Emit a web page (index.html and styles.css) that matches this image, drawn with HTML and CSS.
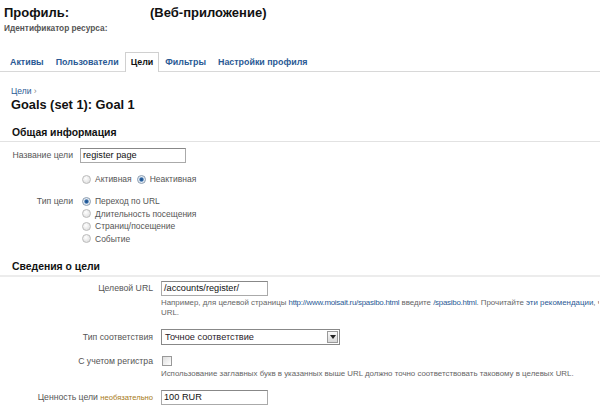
FILE: index.html
```html
<!DOCTYPE html>
<html lang="ru">
<head>
<meta charset="utf-8">
<link rel="stylesheet" href="styles.css">
</head>
<body>
<div class="page">
  <div class="header">
    <h1 class="title"><span class="t-profile">Профиль:</span><span>(Веб-приложение)</span></h1>
    <div class="resource">Идентификатор ресурса:</div>
  </div>
  <div class="tabs">
    <a class="tab">Активы</a>
    <a class="tab">Пользователи</a>
    <a class="tab active">Цели</a>
    <a class="tab">Фильтры</a>
    <a class="tab">Настройки профиля</a>
  </div>
  <div class="crumbs"><a class="link">Цели</a> ›</div>
  <h2 class="goal-title">Goals (set 1): Goal 1</h2>

  <h3 class="section">Общая информация</h3>
  <div class="form1">
    <div class="row r-name">
      <div class="lbl">Название цели</div>
      <div class="field"><div class="input w106">register page</div></div>
    </div>
    <div class="row r-active">
      <div class="lbl"></div>
      <div class="field radios-inline">
        <span class="opt"><span class="radio"></span>Активная</span>
        <span class="opt"><span class="radio on"></span>Неактивная</span>
      </div>
    </div>
    <div class="row r-type">
      <div class="lbl">Тип цели</div>
      <div class="field radios-stack">
        <span class="opt"><span class="radio on"></span>Переход по URL</span>
        <span class="opt"><span class="radio"></span>Длительность посещения</span>
        <span class="opt"><span class="radio"></span>Страниц/посещение</span>
        <span class="opt"><span class="radio"></span>Событие</span>
      </div>
    </div>
  </div>

  <h3 class="section section2">Сведения о цели</h3>
  <div class="form2">
    <div class="row r-url">
      <div class="lbl">Целевой URL</div>
      <div class="field">
        <div class="input w107">/accounts/register/</div>
        <div class="help help1">Например, для целевой страницы <a class="link latin">http://www.moisait.ru/spasibo.html</a> введите <a class="link latin">/spasibo.html</a>. Прочитайте <a class="link">эти рекомендации</a>, чтобы задать<br>URL.</div>
      </div>
    </div>
    <div class="row r-match">
      <div class="lbl">Тип соответствия</div>
      <div class="field">
        <div class="select"><span class="sel-text">Точное соответствие</span><span class="sel-btn"><svg width="6" height="4" viewBox="0 0 6 4"><path d="M0 0h6L3 4z" fill="#222"/></svg></span></div>
      </div>
    </div>
    <div class="row r-case">
      <div class="lbl">С учетом регистра</div>
      <div class="field">
        <span class="checkbox"></span>
        <div class="help help2">Использование заглавных букв в указанных выше URL должно точно соответствовать таковому в целевых URL.</div>
      </div>
    </div>
    <div class="row r-value">
      <div class="lbl">Ценность цели <span class="optional">необязательно</span></div>
      <div class="field"><div class="input w107">100 RUR</div></div>
    </div>
  </div>
</div>
</body>
</html>
```

FILE: styles.css
```css
html, body {
  margin: 0;
  padding: 0;
  background: #fff;
}
body {
  font-family: "Liberation Sans", Arial, sans-serif;
  color: #222;
  width: 600px;
  height: 411px;
  overflow: hidden;
}
.page {
  padding: 0;
}
.title {
  margin: 0 0 0 4px;
  padding-top: 5px;
  font-size: 13px;
  line-height: 16px;
  font-weight: bold;
  color: #111;
  display: flex;
}
.t-profile {
  width: 146px;
}
.resource {
  margin: 2px 0 0 4px;
  font-size: 8.3px;
  line-height: 10px;
  color: #555;
  font-weight: bold;
}
.tabs {
  margin-top: 19px;
  padding-left: 4px;
  display: flex;
  height: 19px;
  border-bottom: 1px solid #d8d8d8;
}
.tab {
  font-size: 8.9px;
  font-weight: bold;
  color: #2a5a95;
  line-height: 19px;
  padding: 0 5px;
  border: 1px solid transparent;
  border-bottom: none;
  margin-bottom: -1px;
  white-space: nowrap;
}
.tab.active {
  color: #111;
  background: #fff;
  border-color: #d0d0d0;
  height: 19px;
}
.crumbs {
  margin: 14px 0 0 11px;
  font-size: 8.5px;
  line-height: 10px;
  color: #888;
}
.link {
  color: #2a5a95;
  text-decoration: none;
}
.goal-title {
  margin: 1px 0 0 11px;
  font-size: 12.8px;
  line-height: 16px;
  font-weight: bold;
  color: #111;
}
.section {
  margin: 14px 0 0 0;
  padding: 0 0 2px 12px;
  font-size: 10.4px;
  line-height: 12px;
  font-weight: bold;
  color: #111;
  border-bottom: 1px solid #e2e2e2;
}
.section2 {
  margin-top: 16px;
  border-bottom: 2px solid #ececec;
}
.row {
  display: flex;
  align-items: flex-start;
}
.lbl {
  text-align: right;
  font-size: 8.7px;
  color: #555;
  flex-shrink: 0;
  white-space: nowrap;
}
.form1 .lbl {
  width: 73px;
  padding-right: 7px;
}
.form2 .lbl {
  width: 153px;
  padding-right: 8px;
}
.input {
  box-sizing: border-box;
  height: 15px;
  border: 1px solid #aaa;
  border-top-color: #888;
  font-size: 9.2px;
  line-height: 13px;
  padding: 0 2px;
  color: #111;
  white-space: nowrap;
}
.w106 { width: 106px; }
.w107 { width: 107px; }
.r-name { margin-top: 6px; }
.r-name .lbl { line-height: 15px; }
.r-active { margin-top: 10px; }
.opt {
  display: flex;
  align-items: center;
  font-size: 8.5px;
  color: #555;
  height: 12px;
  line-height: 12px;
  white-space: nowrap;
}
.radios-inline {
  display: flex;
  gap: 5px;
  margin-left: 2px;
}
.radios-stack {
  display: flex;
  flex-direction: column;
  margin-left: 2px;
}
.radios-stack .opt { height: 12.5px; }
.r-type { margin-top: 10px; }
.r-type .lbl { line-height: 12.5px; }
.radio {
  box-sizing: border-box;
  width: 9px;
  height: 9px;
  border-radius: 50%;
  border: 1px solid #bbb;
  background: radial-gradient(circle at 40% 35%, #fff, #d8d8d8);
  margin-right: 4px;
  flex-shrink: 0;
}
.radio.on {
  border-color: #8a9cb0;
  background: radial-gradient(circle at 50% 50%, #1f4f86 0, #2c66a6 1.6px, #dfe8f2 2.6px, #f4f4f4 4px);
}
.r-url { margin-top: 4px; }
.r-url .lbl { line-height: 15px; }
.help {
  font-size: 7.9px;
  line-height: 10px;
  color: #666;
  white-space: nowrap;
}
.help1 {
  margin-top: 2px;
  width: 438px;
  overflow: hidden;
}
.latin {
  letter-spacing: -0.25px;
}
.r-match { margin-top: 11px; }
.r-match .lbl { line-height: 16px; }
.select {
  box-sizing: border-box;
  width: 179px;
  height: 16px;
  border: 1px solid #888;
  display: flex;
  align-items: stretch;
  background: #fff;
}
.sel-text {
  flex: 1;
  font-size: 9.2px;
  line-height: 14px;
  padding-left: 3px;
  color: #2a1a2a;
}
.sel-btn {
  box-sizing: border-box;
  width: 11px;
  margin: 1px;
  border: 1px solid #9a9a9a;
  background: linear-gradient(#fafafa, #d8d8d8);
  display: flex;
  align-items: center;
  justify-content: center;
}
.r-case { margin-top: 10px; }
.r-case .lbl { line-height: 12px; }
.checkbox {
  display: block;
  box-sizing: border-box;
  width: 10px;
  height: 10px;
  margin-top: 1px;
  border: 1px solid #999;
  background: linear-gradient(135deg, #dedede, #fff);
  margin-left: 1px;
}
.help2 { margin-top: 3px; }
.r-value { margin-top: 11px; }
.r-value .lbl { line-height: 15px; }
.optional {
  font-size: 7.6px;
  color: #a77a16;
}
```
